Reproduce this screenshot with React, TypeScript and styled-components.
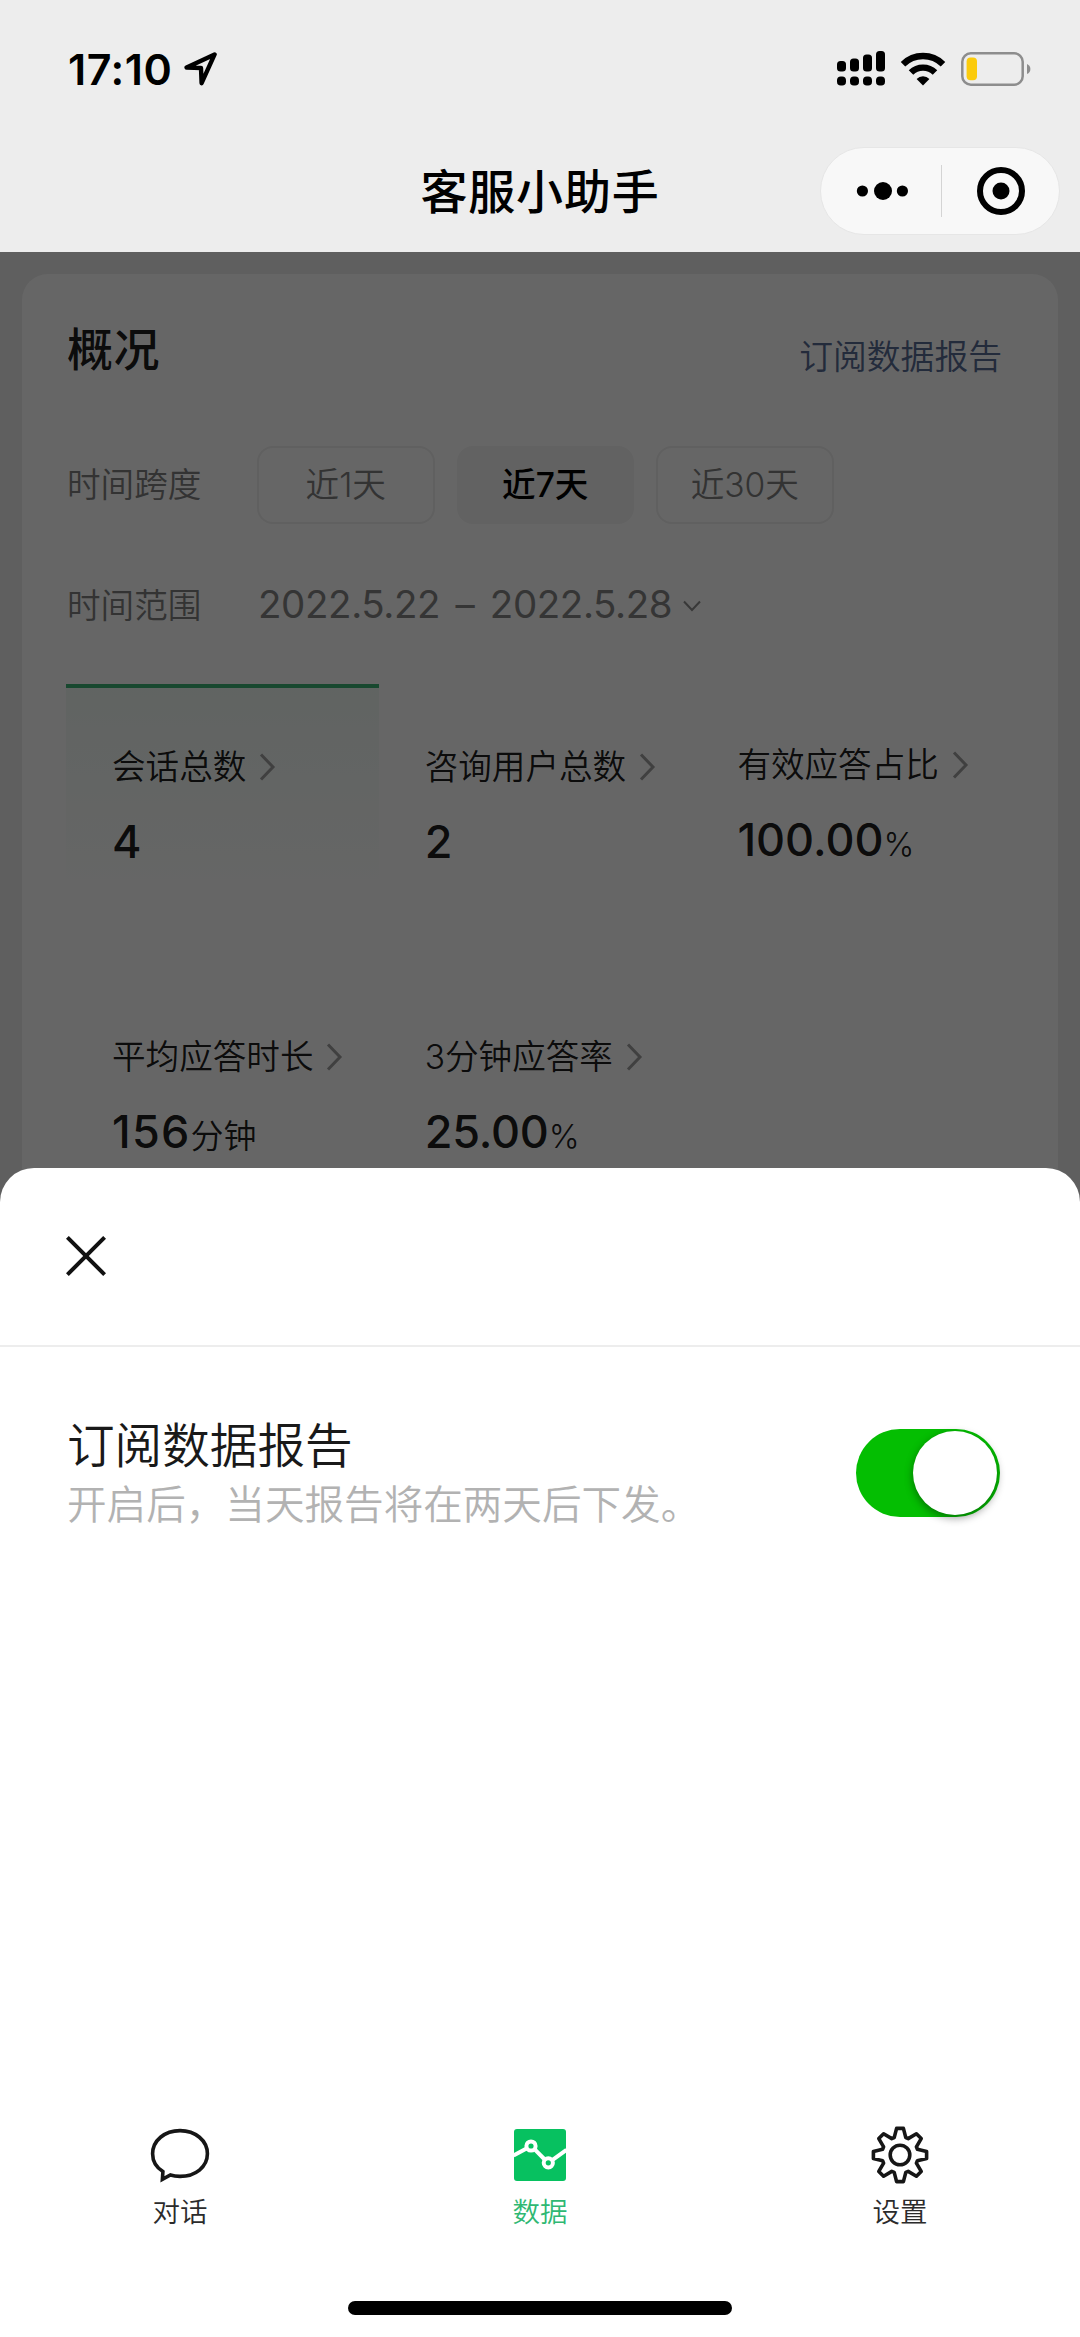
import React from "react";
import styled, { createGlobalStyle, css } from "styled-components";

const GlobalStyle = createGlobalStyle`
  *, *::before, *::after { box-sizing: border-box; }
  html, body { margin: 0; padding: 0; }
  body {
    font-family: Inter, "Noto Sans CJK SC", sans-serif;
    font-weight: 350;
    color: #191919;
    background: #fff;
  }
  svg { display: block; flex: none; }
`;

const Screen = styled.div`
  position: relative;
  width: 1080px;
  height: 2337px;
  overflow: hidden;
  display: flex;
  flex-direction: column;
  background: #ededed;
`;

/* ---------- header ---------- */

const Header = styled.header`
  flex: none;
  height: 252px;
  background: #ededed;
  color: #000;
`;

const StatusBar = styled.div`
  height: 137px;
  padding: 0 49px 0 68px;
  display: flex;
  justify-content: space-between;
  align-items: center;
`;

const StatusGroup = styled.div<{ $gap: number }>`
  display: flex;
  align-items: center;
  gap: ${(p) => p.$gap}px;
`;

const Clock = styled.span`
  font-size: 43px;
  line-height: 44px;
  font-weight: 600;
  letter-spacing: 0.5px;
`;

const NavBar = styled.div`
  height: 108px;
  padding: 0 20px;
  display: grid;
  grid-template-columns: 240px 1fr 240px;
  align-items: center;
`;

const NavTitle = styled.h1`
  grid-column: 2;
  margin: 0;
  padding-top: 2px;
  text-align: center;
  font-size: 47px;
  line-height: 60px;
  font-weight: 500;
  letter-spacing: 0.8px;
`;

const Capsule = styled.div`
  height: 88px;
  border-radius: 44px;
  border: 1.5px solid #e6e6e6;
  background: #f8f8f8;
  display: grid;
  grid-template-columns: 120px 1px 1fr;
  align-items: center;
  justify-items: center;
`;

const CapsuleRule = styled.span`
  width: 1.5px;
  height: 52px;
  background: #d4d4d4;
`;

/* ---------- overview card ---------- */

const Page = styled.main`
  flex: 1;
  padding: 22px 22px 0;
`;

const Card = styled.section`
  height: 1300px;
  padding: 43px 44px 0;
  border-radius: 26px;
  background: #fff;
`;

const CardHead = styled.div`
  height: 64px;
  padding: 0 12px 0 1px;
  display: flex;
  justify-content: space-between;
`;

const CardTitle = styled.h2`
  margin: 0;
  font-size: 46px;
  line-height: 64px;
  font-weight: 500;
  letter-spacing: 0.6px;
  color: rgba(0, 0, 0, 0.9);
`;

const CardLink = styled.a`
  padding-top: 8px;
  font-size: 33.8px;
  line-height: 64px;
  color: #576b95;
`;

const Field = styled.div<{ $top: number }>`
  margin-top: ${(p) => p.$top}px;
  height: 78px;
  padding-left: 1px;
  display: flex;
  align-items: center;
`;

const FieldLabel = styled.span`
  width: 190px;
  font-size: 33.6px;
  line-height: 78px;
  color: #808080;
`;

const Options = styled.div`
  display: flex;
  gap: 22px;
`;

const Option = styled.button<{ $active?: boolean }>`
  width: 177.5px;
  height: 78px;
  padding: 0;
  border: 2px solid #f0f0f0;
  border-radius: 16px;
  background: transparent;
  font: 350 33.6px/74px Inter, "Noto Sans CJK SC", sans-serif;
  color: #808080;
  ${(p) =>
    p.$active &&
    css`
      border-color: #f5f5f5;
      background: #f5f5f5;
      color: #000;
      font-weight: 500;
    `}
`;

const DateRange = styled.div`
  display: flex;
  align-items: center;
  gap: 11px;
  color: #858585;
`;

const DateText = styled.span`
  padding: 0 0 5px 1px;
  font-size: 38.5px;
  line-height: 70px;
  font-weight: 400;
  letter-spacing: -0.4px;
  word-spacing: 5px;
`;

const Metrics = styled.div`
  margin-top: 39px;
  display: grid;
  grid-template-columns: repeat(3, 312.7px);
  grid-auto-rows: 290px;
`;

const Metric = styled.div<{ $active?: boolean; $raised?: boolean }>`
  padding: ${(p) => (p.$raised ? 51.5 : 54)}px 0 0 46px;
  border-top: 4px solid transparent;
  ${(p) =>
    p.$active &&
    css`
      border-top-color: #3eb575;
      background: linear-gradient(rgba(62, 181, 117, 0.07), rgba(62, 181, 117, 0) 210px) padding-box;
    `}
`;

const MetricLabel = styled.div`
  height: 50px;
  display: flex;
  align-items: center;
  gap: 13px;
  white-space: nowrap;
  font-size: 33.6px;
  line-height: 50px;
  color: rgba(0, 0, 0, 0.9);
`;

const MetricValue = styled.div<{ $tracking?: number }>`
  margin-top: 20px;
  font-size: 45px;
  line-height: 60px;
  font-weight: 500;
  letter-spacing: ${(p) => p.$tracking ?? 0}px;
  color: rgba(0, 0, 0, 0.9);
`;

const Unit = styled.span`
  font-size: 33px;
  font-weight: 350;
  letter-spacing: 0;
`;

/* ---------- overlay and bottom sheet ---------- */

const Mask = styled.div`
  position: absolute;
  inset: 252px 0 0;
  background: rgba(0, 0, 0, 0.6);
`;

const Sheet = styled.div`
  position: absolute;
  left: 0;
  right: 0;
  bottom: 0;
  height: 1169px;
  border-radius: 34px 34px 0 0;
  background: #fff;
  display: flex;
  flex-direction: column;
`;

const SheetHead = styled.div`
  height: 179px;
  padding: 68px 66px 0;
  border-bottom: 2px solid #ededed;
`;

const SheetRow = styled.div`
  flex: 1;
  padding: 66px 80px 0 67px;
  display: flex;
  justify-content: space-between;
  align-items: flex-start;
`;

const SheetTitle = styled.div`
  font-size: 47.6px;
  line-height: 66px;
  color: #191919;
`;

const SheetNote = styled.div`
  font-size: 39.6px;
  line-height: 52px;
  color: #b2b2b2;
`;

const Switch = styled.div`
  width: 144px;
  height: 88px;
  margin-top: 16px;
  padding: 2px 3px;
  border-radius: 44px;
  background: #04be02;
  display: flex;
  justify-content: flex-end;
`;

const Knob = styled.span`
  width: 84px;
  height: 84px;
  border-radius: 50%;
  background: #fff;
  box-shadow: 0 3px 8px rgba(0, 0, 0, 0.4);
`;

const TabBar = styled.nav`
  height: 176px;
  display: grid;
  grid-template-columns: repeat(3, 1fr);
`;

const Tab = styled.div<{ $active?: boolean }>`
  display: flex;
  flex-direction: column;
  align-items: center;
  gap: 3px;
  font-size: 27.5px;
  line-height: 48px;
  color: ${(p) => (p.$active ? "#2fb873" : "#2b2b2b")};
`;

const HomeArea = styled.div`
  height: 36px;
  display: flex;
  justify-content: center;
`;

const HomeBar = styled.span`
  width: 384px;
  height: 14px;
  border-radius: 7px;
  background: #000;
`;

/* ---------- icons ---------- */

const LocationIcon = () => (
  <svg width="34" height="34" viewBox="0 0 34 34">
    <path d="M30.6 2.4 L2.6 15.6 L17 16 L17.6 31.2 Z" fill="none" stroke="#000" strokeWidth="4.4" strokeLinejoin="round" />
  </svg>
);

const bars = [10.5, 13, 17, 20.5];

const SignalIcon = () => (
  <svg width="48" height="35" viewBox="0 0 48 35">
    {bars.map((h, i) => (
      <g key={h}>
        <rect x={i * 13} y={20.5 - h} width="9" height={h} rx="3.5" />
        <rect x={i * 13} y="25.5" width="9" height="9" rx="3.8" />
      </g>
    ))}
  </svg>
);

const WifiIcon = () => (
  <svg width="46" height="34" viewBox="0 0 46 34">
    <g fill="none" stroke="#000" strokeWidth="6.4">
      <path d="M3 12.2 A28.5 28.5 0 0 1 43 12.2" />
      <path d="M11 20.6 A17 17 0 0 1 35 20.6" />
    </g>
    <path d="M23 33.5 L16.6 27 A9 9 0 0 1 29.4 27 Z" />
  </svg>
);

const BatteryIcon = () => (
  <svg width="70" height="34" viewBox="0 0 70 34">
    <rect x="1.3" y="1.3" width="60.4" height="31.4" rx="8.5" fill="none" stroke="#8d8d8d" strokeWidth="2.5" />
    <rect x="5.6" y="5.5" width="10.4" height="22.8" rx="4" fill="#fbcb0c" />
    <path d="M66 12 Q69.4 13.5 69.4 17 Q69.4 20.5 66 22 Z" fill="#8d8d8d" />
  </svg>
);

const MoreIcon = () => (
  <svg width="54" height="20" viewBox="0 0 54 20">
    <circle cx="8.4" cy="10" r="5.6" />
    <circle cx="29" cy="10" r="9" />
    <circle cx="48.4" cy="10" r="5.6" />
  </svg>
);

const TargetIcon = () => (
  <svg width="48" height="48" viewBox="0 0 48 48">
    <circle cx="24" cy="24" r="21" fill="none" stroke="#000" strokeWidth="6" />
    <circle cx="24" cy="24" r="8.5" />
  </svg>
);

const ChevronDown = () => (
  <svg width="18" height="12" viewBox="0 0 18 12">
    <path d="M1 1.5 L9 10 L17 1.5" fill="none" stroke="#8c8c8c" strokeWidth="2" />
  </svg>
);

const ChevronRight = () => (
  <svg width="17" height="28" viewBox="0 0 17 28">
    <path d="M2 1.5 L14 14 L2 26.5" fill="none" stroke="#a0a0a0" strokeWidth="3" />
  </svg>
);

const CloseIcon = () => (
  <svg width="40" height="40" viewBox="0 0 40 40">
    <path d="M1.4 1.4 L38.6 38.6 M38.6 1.4 L1.4 38.6" stroke="#111" strokeWidth="4" />
  </svg>
);

const ChatIcon = () => (
  <svg width="60" height="60" viewBox="0 0 60 60">
    <path
      d="M12.9 46.6 C5.6 42 2.6 35.4 2.6 28.8 C2.6 15.6 14.6 5.6 30 5.6 C45.4 5.6 57.4 15.6 57.4 28.8 C57.4 42 45.4 51.4 30 51.4 C26.6 51.4 23.4 51 20.4 50 L12.4 54.4 Z"
      fill="none"
      stroke="#161616"
      strokeWidth="3.6"
    />
  </svg>
);

const DataIcon = () => (
  <svg width="60" height="60" viewBox="0 0 60 60">
    <rect x="4" y="4" width="52" height="52" rx="3" fill="#07c160" />
    <g fill="none" stroke="#fff" strokeWidth="4">
      <path d="M3.5 30.6 L16.5 23.4 M25.2 24.8 L34.2 34 M42.6 34.8 L56.5 24.8" />
      <circle cx="21" cy="21" r="4.6" />
      <circle cx="38.3" cy="37.8" r="4.6" />
    </g>
  </svg>
);

const gearPath = (() => {
  const tooth = [[-5.8, -17.4], [-3.4, -26.6], [3.4, -26.6], [5.8, -17.4]];
  const points: string[] = [];
  for (let i = 0; i < 8; i++) {
    const a = (i * Math.PI) / 4;
    tooth.forEach(([x, y]) => {
      const px = 30 + x * Math.cos(a) - y * Math.sin(a);
      const py = 30 + x * Math.sin(a) + y * Math.cos(a);
      points.push(`${px.toFixed(2)} ${py.toFixed(2)}`);
    });
  }
  return `M${points.join("L")}Z`;
})();

const GearIcon = () => (
  <svg width="60" height="60" viewBox="0 0 60 60">
    <g fill="none" stroke="#161616" strokeWidth="3.6" strokeLinejoin="round">
      <path d={gearPath} />
      <circle cx="30" cy="30" r="9.8" />
    </g>
  </svg>
);

/* ---------- data ---------- */

const metrics = [
  { label: "会话总数", value: "4", active: true },
  { label: "咨询用户总数", value: "2" },
  { label: "有效应答占比", value: "100.00", unit: "%", raised: true },
  { label: "平均应答时长", value: "156", unit: "分钟", tracking: 1.2 },
  { label: "3分钟应答率", value: "25.00", unit: "%", tracking: -0.2 },
];

const spans = ["近1天", "近7天", "近30天"];

export default function App() {
  return (
    <>
      <GlobalStyle />
      <Screen>
        <Header>
          <StatusBar>
            <StatusGroup $gap={12}>
              <Clock>17:10</Clock>
              <LocationIcon />
            </StatusGroup>
            <StatusGroup $gap={15}>
              <SignalIcon />
              <WifiIcon />
              <BatteryIcon />
            </StatusGroup>
          </StatusBar>
          <NavBar>
            <NavTitle>客服小助手</NavTitle>
            <Capsule>
              <MoreIcon />
              <CapsuleRule />
              <TargetIcon />
            </Capsule>
          </NavBar>
        </Header>

        <Page>
          <Card>
            <CardHead>
              <CardTitle>概况</CardTitle>
              <CardLink>订阅数据报告</CardLink>
            </CardHead>
            <Field $top={65}>
              <FieldLabel>时间跨度</FieldLabel>
              <Options>
                {spans.map((s) => (
                  <Option key={s} $active={s === "近7天"}>
                    {s}
                  </Option>
                ))}
              </Options>
            </Field>
            <Field $top={43}>
              <FieldLabel>时间范围</FieldLabel>
              <DateRange>
                <DateText>2022.5.22 – 2022.5.28</DateText>
                <ChevronDown />
              </DateRange>
            </Field>
            <Metrics>
              {metrics.map((m) => (
                <Metric key={m.label} $active={m.active} $raised={m.raised}>
                  <MetricLabel>
                    {m.label}
                    <ChevronRight />
                  </MetricLabel>
                  <MetricValue $tracking={m.tracking}>
                    {m.value}
                    {m.unit && <Unit>{m.unit}</Unit>}
                  </MetricValue>
                </Metric>
              ))}
            </Metrics>
          </Card>
        </Page>

        <Mask />

        <Sheet>
          <SheetHead>
            <CloseIcon />
          </SheetHead>
          <SheetRow>
            <div>
              <SheetTitle>订阅数据报告</SheetTitle>
              <SheetNote>开启后，当天报告将在两天后下发。</SheetNote>
            </div>
            <Switch>
              <Knob />
            </Switch>
          </SheetRow>
          <TabBar>
            <Tab>
              <ChatIcon />
              对话
            </Tab>
            <Tab $active>
              <DataIcon />
              数据
            </Tab>
            <Tab>
              <GearIcon />
              设置
            </Tab>
          </TabBar>
          <HomeArea>
            <HomeBar />
          </HomeArea>
        </Sheet>
      </Screen>
    </>
  );
}
